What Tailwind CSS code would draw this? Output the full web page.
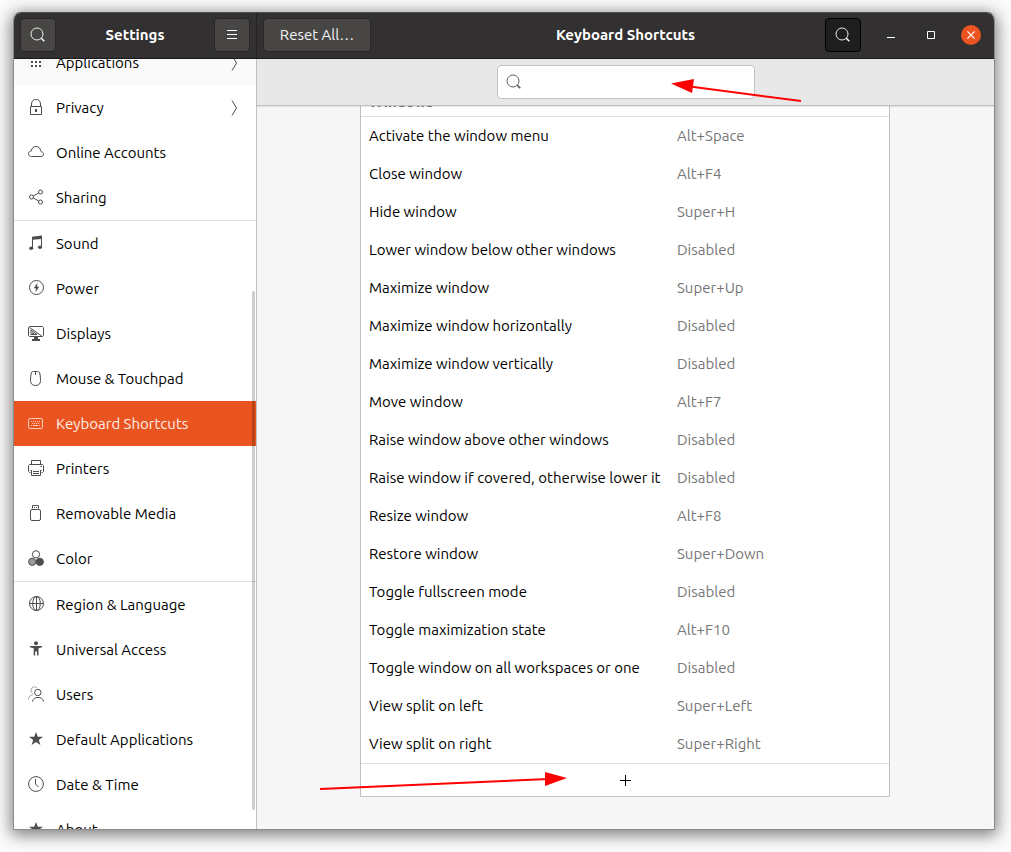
<!DOCTYPE html>
<html lang="en">
<head>
<meta charset="utf-8">
<meta name="viewport" content="width=device-width, initial-scale=1">
<title>Settings – Keyboard Shortcuts</title>
<script src="https://cdn.jsdelivr.net/npm/@tailwindcss/browser@4"></script>
</head>
<body class="relative flex h-screen bg-[#fbfbfb] pt-3 pr-4 pb-[22px] pl-[13px] font-['Ubuntu','Noto_Sans',sans-serif] text-[15px] leading-5 text-black">

<svg class="hidden" aria-hidden="true">
  <symbol id="search" viewBox="0 0 16 16"><circle cx="7" cy="7" r="6" fill="none" stroke="currentColor" stroke-width=".9"/><path d="M11.3 11.3L14.3 14.3" stroke="currentColor" stroke-width="1.5"/></symbol>
  <symbol id="chevron" viewBox="0 0 8 18"><path d="M2 1.5L6.500 9L2 16.500" fill="none" stroke="currentColor"/></symbol>
  <symbol id="star" viewBox="0 0 16 16"><path d="M8 .9L9.8 5.700H15L10.8 9L12.4 14L8 11L3.6 14L5.2 9L1 5.700H6.2Z" fill="currentColor"/></symbol>
</svg>

<div class="flex min-w-0 flex-1 flex-col overflow-hidden rounded-t-lg border border-[#8b8b8b] border-t-[#4e4c4c] bg-[#f6f6f6] shadow-[0_3px_16px_2px_rgba(0,0,0,0.5)]">
  <header class="flex h-[46px] shrink-0 border-b border-[#1b1a1a] bg-[#323030] text-white">
    <div class="flex w-[243px] shrink-0 items-center justify-between border-r border-[#242222] px-[6px] pb-px">
      <button type="button" aria-label="Search settings" class="flex h-[34px] w-9 items-center justify-center rounded border border-[#282626] bg-[#484644]"><svg class="size-4"><use href="#search"/></svg></button>
      <h1 class="font-bold">Settings</h1>
      <button type="button" aria-label="Menu" class="flex h-[34px] w-9 items-center justify-center rounded border border-[#282626] bg-[#484644]"><svg class="size-4" viewBox="0 0 16 16"><path d="M3 3.5H13M3 7.5H13M3 11.5H13" stroke="currentColor"/></svg></button>
    </div>
    <div class="grid min-w-0 flex-1 grid-cols-[1fr_auto_1fr] items-center px-[6px] pb-px">
      <button type="button" class="h-[34px] w-[108px] rounded border border-[#282626] bg-[#484644] text-[#f4f4f4]">Reset All…</button>
      <h2 class="font-bold">Keyboard Shortcuts</h2>
      <div class="-mr-[3px] flex items-center justify-end">
        <button type="button" aria-label="Search shortcuts" class="mr-[10px] flex h-[34px] w-9 items-center justify-center rounded border border-black bg-[#1f1e1e]"><svg class="size-4"><use href="#search"/></svg></button>
        <button type="button" aria-label="Minimize" class="flex h-8 w-10 items-center justify-center"><svg class="size-4" viewBox="0 0 16 16"><path d="M4 10.5H12" stroke="currentColor"/></svg></button>
        <button type="button" aria-label="Maximize" class="flex h-8 w-10 items-center justify-center"><svg class="size-4" viewBox="0 0 16 16"><path d="M4.5 4.5H11.5V11.5H4.5Z" fill="none" stroke="currentColor"/></svg></button>
        <button type="button" aria-label="Close" class="flex h-8 w-10 items-center justify-center"><svg class="size-5" viewBox="0 0 20 20"><circle cx="10" cy="10" r="10" fill="#e95420"/><path d="M6.4 6.4L13.6 13.6M13.6 6.4L6.4 13.6" stroke="currentColor" stroke-width="1.2"/></svg></button>
      </div>
    </div>
  </header>

  <div class="flex min-h-0 flex-1">
    <nav aria-label="Settings" class="relative w-[243px] shrink-0 overflow-hidden border-r border-[#c4c2c0] bg-white">
      <ul class="-mt-[19px] [&_a]:flex [&_a]:h-[45px] [&_a]:items-center [&_a]:gap-3 [&_a]:pr-[18px] [&_a]:pl-[14px] [&_a>svg:first-child]:mb-px [&_a>svg:first-child]:size-4 [&_a>svg:first-child]:shrink-0 [&_a>svg]:text-[#4d4d4d]">
        <li><a href="#" class="bg-[#fafafa]"><svg viewBox="0 0 16 16"><path d="M3 3h2v2H3zM7 3h2v2H7zM11 3h2v2h-2zM3 7h2v2H3zM7 7h2v2H7zM11 7h2v2h-2zM3 11h2v2H3zM7 11h2v2H7zM11 11h2v2h-2z" fill="currentColor"/></svg><span class="flex-1">Applications</span><svg class="h-[18px] w-2"><use href="#chevron"/></svg></a></li>
        <li><a href="#"><svg viewBox="0 0 16 16"><path d="M2.5 7.5H13.5V15.5H2.5ZM3.5 7.500V5C3.5 -1.200 12.500 -1.200 12.500 5V7.500" fill="none" stroke="currentColor"/><path d="M7 10h2v3H7z" fill="currentColor"/></svg><span class="flex-1">Privacy</span><svg class="h-[18px] w-2"><use href="#chevron"/></svg></a></li>
        <li><a href="#"><svg viewBox="0 0 16 16"><path d="M3.500 12.500C1.600 12.500.5 11.300.5 9.700C.5 8.100 1.700 7.100 3.400 6.900C3.600 4.200 5.400 2.500 8 2.500C10.600 2.500 12.300 4.100 12.600 6.500C12.600 7.300 12.800 7.500 13.500 7.800C15 8.300 15.500 9.200 15.500 10.100C15.500 11.600 14.400 12.500 12.900 12.500Z" fill="none" stroke="currentColor"/></svg><span>Online Accounts</span></a></li>
        <li><a href="#"><svg viewBox="0 0 16 16"><g fill="none" stroke="currentColor"><circle cx="3.500" cy="8" r="2"/><circle cx="12.500" cy="3" r="2"/><circle cx="12.500" cy="13" r="2"/><path d="M5.300 7L10.700 4M5.300 9L10.700 12"/></g></svg><span>Sharing</span></a></li>
        <li class="border-t border-[#dfdfdf]"><a href="#"><svg viewBox="0 0 16 16"><path d="M4 1.800L14 .5V12H13V4L5 4.800V13H4Z" fill="currentColor"/><ellipse cx="3.200" cy="13.200" rx="2" ry="1.700" fill="currentColor"/><ellipse cx="12" cy="12.200" rx="2" ry="1.700" fill="currentColor"/></svg><span>Sound</span></a></li>
        <li><a href="#"><svg viewBox="0 0 16 16"><circle cx="8.500" cy="7.500" r="7" fill="none" stroke="currentColor"/><path d="M9.500 2.800L5.800 8.200H8L7.500 12.200L11.200 6.800H9Z" fill="currentColor"/></svg><span>Power</span></a></li>
        <li><a href="#"><svg viewBox="0 0 16 16"><path d="M1.500 1.500H14.500L15.500 2.500V10.500L14.500 11.500H1.500L.5 10.500V2.500ZM1.500 2.500L14.500 11.500M3 5V9.500H9ZM4.500 7.500V8.500H6" fill="none" stroke="currentColor"/><path d="M6 12h4v2h2V16H4v-2h2z" fill="currentColor"/></svg><span>Displays</span></a></li>
        <li><a href="#"><svg viewBox="0 0 16 16"><path d="M5.500 1.500C3.800 1.500 3.300 2 2.900 5C2.600 7 2.500 8.500 2.500 10.500C2.500 14 4.500 15.500 7.500 15.500C10.500 15.500 12.500 14 12.500 10.500C12.500 8.500 12.400 7 12.100 5C11.700 2 11.200 1.500 9.500 1.500ZM7.500 1.500V5" fill="none" stroke="currentColor"/></svg><span>Mouse &amp; Touchpad</span></a></li>
        <li><a href="#" aria-current="page" class="bg-[#e95420] text-[#fdeee8] [&>svg]:!text-[#f9cbb9]"><svg viewBox="0 0 16 16"><rect x=".5" y="3.500" width="14" height="10" rx="1.500" fill="none" stroke="currentColor"/><path d="M3 6.500H13M4 8.500H12" stroke="currentColor" stroke-dasharray="1 1"/><path d="M3 10.500H4M5 10.500H10M11 10.500H12" stroke="currentColor"/></svg><span>Keyboard Shortcuts</span></a></li>
        <li><a href="#"><svg viewBox="0 0 16 16"><path d="M3.500 4V.5H12.500V4M2.500 12.500H1.500L.5 11.500V5.500L1.500 4.500H14.500L15.500 5.500V11.500L14.500 12.500H13.500M3.500 10V15.500H12.500V10M5 11.500H11M5 13.500H11M2.500 10.500H4M12 10.500H13.500M12.500 6.500H14" fill="none" stroke="currentColor"/></svg><span>Printers</span></a></li>
        <li><a href="#"><svg viewBox="0 0 16 16"><rect x="2.500" y="4.500" width="10" height="11" rx="1.500" fill="none" stroke="currentColor"/><path d="M4.500 3.500V.5H10.500V3.500M6 2.500H7M8 2.500H9" fill="none" stroke="currentColor"/></svg><span>Removable Media</span></a></li>
        <li><a href="#"><svg viewBox="0 0 16 16"><g stroke="currentColor"><circle cx="8" cy="4.300" r="3.600" fill="#fff"/><circle cx="4.200" cy="11.800" r="3.600" fill="#9b9b9b"/><circle cx="11.800" cy="11.800" r="3.600" fill="currentColor"/></g></svg><span>Color</span></a></li>
        <li class="border-t border-[#dfdfdf]"><a href="#"><svg viewBox="0 0 16 16"><g fill="none" stroke="currentColor"><circle cx="8.500" cy="7.500" r="7"/><ellipse cx="8.500" cy="7.500" rx="3.800" ry="7"/><path d="M8.500 .5V14.500M1.500 7.500H15.500"/></g></svg><span>Region &amp; Language</span></a></li>
        <li><a href="#"><svg viewBox="0 0 16 16"><circle cx="8" cy="2.200" r="2" fill="currentColor"/><path d="M2 5H14V6.200L10.500 7.200V14.500H9V10.500H7.200V14.500H5.700V7.200L2 6.200Z" fill="currentColor"/></svg><span>Universal Access</span></a></li>
        <li><a href="#"><svg viewBox="0 0 16 16"><g fill="none" stroke="currentColor"><path d="M.5 13.500C.8 10.500 2 9.300 5 8.700M4.500 7.500C2.500 6.500 2.500 3.500 4 1.800C5.500 .3 8 .5 8.800 2" stroke="#a3a3a3"/><circle cx="9.800" cy="6.500" r="3.200"/><path d="M4.500 15.500C5 12.500 7 11.500 10 11.500C13 11.500 15 12.500 15.500 15.500"/></g></svg><span>Users</span></a></li>
        <li><a href="#"><svg><use href="#star"/></svg><span>Default Applications</span></a></li>
        <li><a href="#"><svg viewBox="0 0 16 16"><circle cx="8" cy="8" r="7.400" fill="none" stroke="currentColor"/><path d="M7.500 3V8L10.500 11" fill="none" stroke="currentColor"/></svg><span>Date &amp; Time</span></a></li>
        <li><a href="#"><svg><use href="#star"/></svg><span>About</span></a></li>
      </ul>
      <div class="absolute right-px bottom-[19px] h-[519px] w-[3px] rounded-full bg-black/20" aria-hidden="true"></div>
    </nav>

    <main class="flex min-w-0 flex-1 flex-col">
      <div class="z-10 flex h-[47px] shrink-0 items-start justify-center border-b border-[#bfbfbf] bg-[#e8e8e8] pt-[6px] shadow-[0_1px_1px_rgba(0,0,0,0.08)]">
        <label class="flex h-[34px] w-[258px] items-center gap-2 rounded border border-[#c4c2c0] bg-white px-2 text-[#4d4d4d]">
          <svg class="size-4 shrink-0"><use href="#search"/></svg>
          <input type="search" aria-label="Search shortcuts" class="min-w-0 flex-1 bg-transparent outline-none">
        </label>
      </div>
      <div class="min-h-0 flex-1 overflow-hidden pr-px">
        <section class="mx-auto -mt-[29px] w-full max-w-[530px] border border-[#c0c0c0] bg-white">
          <table class="w-full table-fixed border-separate border-spacing-0 text-left [&_tbody_td]:h-[38px] [&_tbody_td]:p-0 [&_tbody_td]:text-[#767676] [&_tbody_th]:p-0 [&_tbody_th]:pl-2 [&_tbody_th]:font-normal">
            <colgroup><col class="w-[316px]"><col></colgroup>
            <thead><tr><th colspan="2" class="h-[39px] border-b border-[#dfdfdf] p-0 pb-1 pl-2 align-bottom font-bold text-[#767676]">Windows</th></tr></thead>
            <tbody>
              <tr><th scope="row">Activate the window menu</th><td>Alt+Space</td></tr>
              <tr><th scope="row">Close window</th><td>Alt+F4</td></tr>
              <tr><th scope="row">Hide window</th><td>Super+H</td></tr>
              <tr><th scope="row">Lower window below other windows</th><td>Disabled</td></tr>
              <tr><th scope="row">Maximize window</th><td>Super+Up</td></tr>
              <tr><th scope="row">Maximize window horizontally</th><td>Disabled</td></tr>
              <tr><th scope="row">Maximize window vertically</th><td>Disabled</td></tr>
              <tr><th scope="row">Move window</th><td>Alt+F7</td></tr>
              <tr><th scope="row">Raise window above other windows</th><td>Disabled</td></tr>
              <tr><th scope="row">Raise window if covered, otherwise lower it</th><td>Disabled</td></tr>
              <tr><th scope="row">Resize window</th><td>Alt+F8</td></tr>
              <tr><th scope="row">Restore window</th><td>Super+Down</td></tr>
              <tr><th scope="row">Toggle fullscreen mode</th><td>Disabled</td></tr>
              <tr><th scope="row">Toggle maximization state</th><td>Alt+F10</td></tr>
              <tr><th scope="row">Toggle window on all workspaces or one</th><td>Disabled</td></tr>
              <tr><th scope="row">View split on left</th><td>Super+Left</td></tr>
              <tr><th scope="row">View split on right</th><td>Super+Right</td></tr>
            </tbody>
          </table>
          <button type="button" aria-label="Add shortcut" class="flex h-[33px] w-full items-center justify-center border-t border-[#dfdfdf]"><svg class="size-4" viewBox="0 0 16 16"><path d="M3 8.500H14M8.500 3V14" stroke="currentColor"/></svg></button>
        </section>
      </div>
    </main>
  </div>
</div>

<svg class="pointer-events-none absolute top-0 left-0 z-20 h-[852px] w-[1011px]" viewBox="0 0 1011 852" fill="red" stroke="none" aria-hidden="true">
  <path d="M690 86.500L801 101" stroke="red" stroke-width="2"/><path d="M671 83.500L694 79L692 93Z"/>
  <path d="M320 789L548 779" stroke="red" stroke-width="2"/><path d="M567 778L545 772V786Z"/>
</svg>
</body>
</html>
